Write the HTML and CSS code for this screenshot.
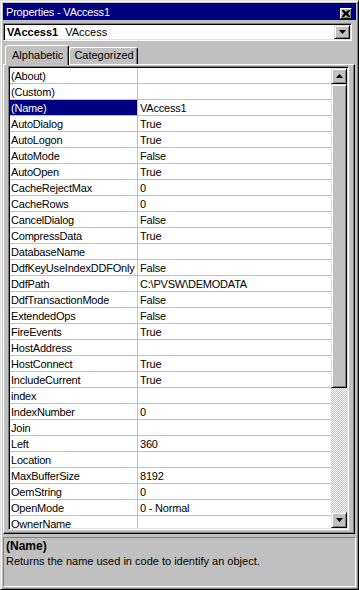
FILE: index.html
```html
<!DOCTYPE html>
<html lang="en">
<head>
    <meta charset="UTF-8" />
    <title>Properties - VAccess1</title>
    <link rel="stylesheet" href="styles.css">
</head>
<body>

    <div class="window">
        <div class="titlebar">
            <span class="title">Properties - VAccess1</span>
            <span class="close-btn">
                <svg width="8" height="7" viewBox="0 0 8 7">
                    <path d="M0 0h2l2 2 2-2h2v1l-2 2.5 2 2.5v1h-2l-2-2-2 2h-2v-1l2-2.5-2-2.5z" fill="#000" />
                </svg>
            </span>
        </div>

        <div class="combo">
            <span class="combo-text"><b>VAccess1</b> VAccess</span>
            <span class="btn drop-btn">
                <svg width="7" height="4" viewBox="0 0 7 4"><path d="M0 0h7l-3.5 4z" fill="#000" /></svg>
            </span>
        </div>

        <div class="tabs">
            <div class="tab active">Alphabetic</div>
            <div class="tab">Categorized</div>
        </div>

        <div class="panel">
            <div class="grid">
                <div class="rows">
                    <div class="row"><span class="name">(About)</span><span class="value"></span></div>
                    <div class="row"><span class="name">(Custom)</span><span class="value"></span></div>
                    <div class="row selected"><span class="name">(Name)</span><span class="value">VAccess1</span></div>
                    <div class="row"><span class="name">AutoDialog</span><span class="value">True</span></div>
                    <div class="row"><span class="name">AutoLogon</span><span class="value">True</span></div>
                    <div class="row"><span class="name">AutoMode</span><span class="value">False</span></div>
                    <div class="row"><span class="name">AutoOpen</span><span class="value">True</span></div>
                    <div class="row"><span class="name">CacheRejectMax</span><span class="value">0</span></div>
                    <div class="row"><span class="name">CacheRows</span><span class="value">0</span></div>
                    <div class="row"><span class="name">CancelDialog</span><span class="value">False</span></div>
                    <div class="row"><span class="name">CompressData</span><span class="value">True</span></div>
                    <div class="row"><span class="name">DatabaseName</span><span class="value"></span></div>
                    <div class="row"><span class="name">DdfKeyUseIndexDDFOnly</span><span class="value">False</span></div>
                    <div class="row"><span class="name">DdfPath</span><span class="value">C:\PVSW\DEMODATA</span></div>
                    <div class="row"><span class="name">DdfTransactionMode</span><span class="value">False</span></div>
                    <div class="row"><span class="name">ExtendedOps</span><span class="value">False</span></div>
                    <div class="row"><span class="name">FireEvents</span><span class="value">True</span></div>
                    <div class="row"><span class="name">HostAddress</span><span class="value"></span></div>
                    <div class="row"><span class="name">HostConnect</span><span class="value">True</span></div>
                    <div class="row"><span class="name">IncludeCurrent</span><span class="value">True</span></div>
                    <div class="row"><span class="name">index</span><span class="value"></span></div>
                    <div class="row"><span class="name">IndexNumber</span><span class="value">0</span></div>
                    <div class="row"><span class="name">Join</span><span class="value"></span></div>
                    <div class="row"><span class="name">Left</span><span class="value">360</span></div>
                    <div class="row"><span class="name">Location</span><span class="value"></span></div>
                    <div class="row"><span class="name">MaxBufferSize</span><span class="value">8192</span></div>
                    <div class="row"><span class="name">OemString</span><span class="value">0</span></div>
                    <div class="row"><span class="name">OpenMode</span><span class="value">0 - Normal</span></div>
                    <div class="row"><span class="name">OwnerName</span><span class="value"></span></div>
                </div>

                <div class="scrollbar">
                    <span class="btn scroll-btn">
                        <svg width="7" height="4" viewBox="0 0 7 4"><path d="M0 4h7l-3.5-4z" fill="#000" /></svg>
                    </span>
                    <span class="btn thumb"></span>
                    <span class="track"></span>
                    <span class="btn scroll-btn">
                        <svg width="7" height="4" viewBox="0 0 7 4"><path d="M0 0h7l-3.5 4z" fill="#000" /></svg>
                    </span>
                </div>
            </div>
        </div>

        <div class="desc">
            <div class="desc-title">(Name)</div>
            <div>Returns the name used in code to identify an object.</div>
        </div>
    </div>

</body>
</html>
```

FILE: styles.css
```css
body {
    margin: 0;
    font-family: "Liberation Sans", Arial, sans-serif;
    font-size: 11px;
    background-color: #c0c0c0;
}

.window {
    box-sizing: border-box;
    width: 359px;
    height: 590px;
    padding: 2px;
    border: 1px solid;
    border-color: #dfdfdf #000 #000 #dfdfdf;
    box-shadow: inset 1px 1px #fff, inset -1px -1px #808080;
    background-color: #c0c0c0;
    display: flex;
    flex-direction: column;
}

    .window > * {
        flex-shrink: 0;
    }

.titlebar {
    height: 17px;
    background-color: #000080;
    color: white;
    display: flex;
    align-items: center;
    justify-content: space-between;
    padding: 0 4px 0 3px;
}

    .titlebar .title {
        font-size: 11px;
        letter-spacing: -0.2px;
    }

.btn {
    box-sizing: border-box;
    display: flex;
    align-items: center;
    justify-content: center;
    background-color: #c0c0c0;
    border: 1px solid;
    border-color: #dfdfdf #000 #000 #dfdfdf;
    box-shadow: inset 1px 1px #fff, inset -1px -1px #808080;
}

.close-btn {
    box-sizing: border-box;
    width: 12px;
    height: 11px;
    margin-top: 3px;
    display: flex;
    align-items: center;
    justify-content: center;
    background-color: #c0c0c0;
    border: 1px solid;
    border-color: #fff #000 #000 #fff;
    box-shadow: inset -1px -1px #808080;
}

.combo {
    box-sizing: border-box;
    height: 18px;
    margin: 3px 4px 0 0;
    background-color: white;
    border: 1px solid;
    border-color: #808080 #fff #fff #808080;
    box-shadow: inset 1px 1px #000, inset -1px -1px #dfdfdf;
    padding: 1px;
    display: flex;
    align-items: center;
    justify-content: space-between;
}

.combo-text {
    padding-left: 2px;
}

    .combo-text b {
        margin-right: 4px;
    }

.drop-btn {
    width: 16px;
    height: 14px;
}

.tabs {
    display: flex;
    align-items: flex-end;
    height: 20px;
    margin-top: 3px;
    padding-left: 2px;
}

.tab {
    box-sizing: border-box;
    height: 17px;
    padding: 1px 3px 0 4px;
    border: 1px solid;
    border-bottom: none;
    border-color: #fff #000 transparent #fff;
    border-radius: 3px 3px 0 0;
    box-shadow: inset -1px 0 #808080;
}

    .tab.active {
        position: relative;
        z-index: 1;
        height: 20px;
        margin-bottom: -1px;
        padding: 3px 5px 0 6px;
        background-color: #c0c0c0;
    }

.panel {
    flex: 1;
    margin-right: 1px;
    padding: 1px 5px 2px 4px;
    border: 1px solid;
    border-color: #fff #000 #000 #fff;
    box-shadow: inset -1px -1px #808080;
}

.grid {
    height: 464px;
    box-sizing: border-box;
    display: flex;
    border: 1px solid;
    border-color: #808080 #fff #fff #808080;
    box-shadow: inset 1px 1px #000, inset -1px -1px #dfdfdf;
    padding: 1px;
}

.rows {
    flex: 1;
    background-color: white;
    overflow: hidden;
}

.row {
    display: flex;
    height: 15px;
    line-height: 17px;
    border-bottom: 1px solid #c0c0c0;
    white-space: nowrap;
    letter-spacing: -0.2px;
}

    .row .name {
        width: 126px;
        padding-left: 1px;
        border-right: 1px solid #c0c0c0;
        overflow: hidden;
    }

    .row .value {
        flex: 1;
        padding-left: 2px;
    }

    .row.selected .name {
        background-color: #000080;
        color: white;
    }

.scrollbar {
    width: 16px;
    display: flex;
    flex-direction: column;
}

.scroll-btn {
    height: 16px;
}

.thumb {
    height: 304px;
}

.track {
    flex: 1;
    background: repeating-conic-gradient(#fff 0 25%, #c0c0c0 0 50%) 0 0 / 2px 2px;
}

.desc {
    box-sizing: border-box;
    height: 50px;
    margin-top: 3px;
    padding: 1px 2px;
    border: 1px solid;
    border-color: #808080 #fff #fff #808080;
    line-height: 15px;
}

.desc-title {
    font-weight: bold;
    font-size: 12px;
}
```
